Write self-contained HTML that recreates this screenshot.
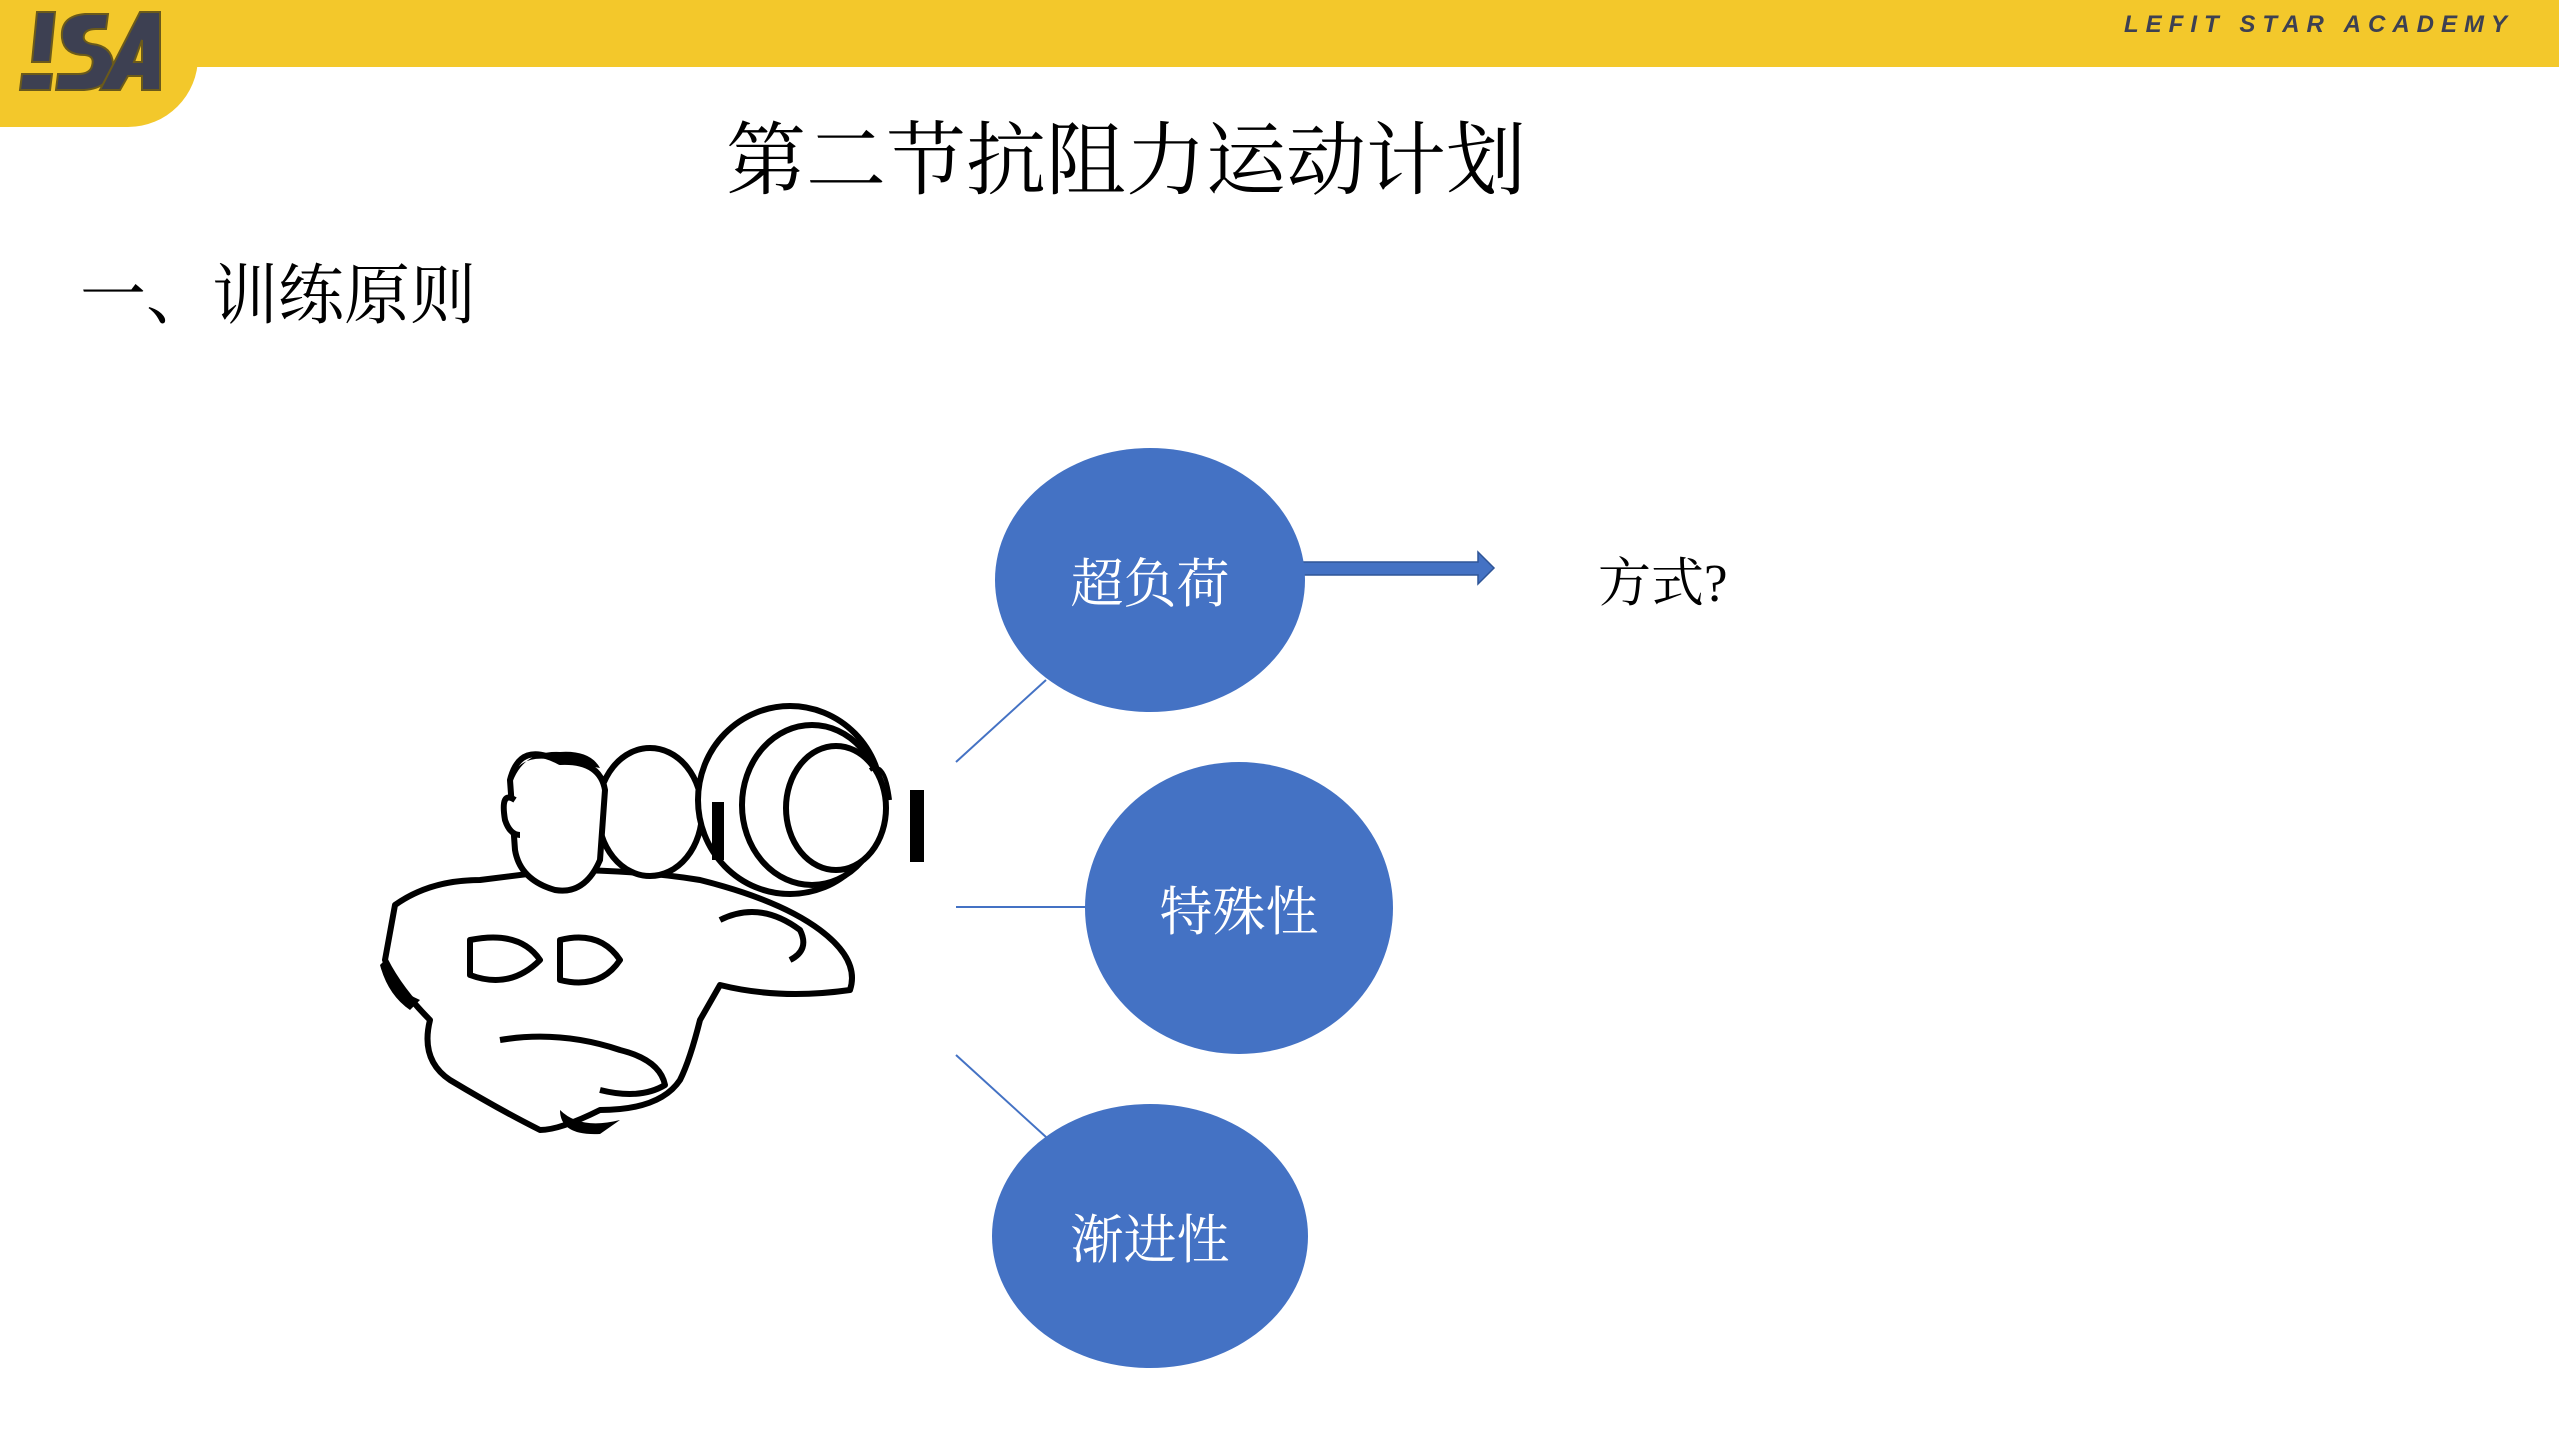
<!DOCTYPE html>
<html><head><meta charset="utf-8"><style>
html,body{margin:0;padding:0;background:#fff;}
body{width:2559px;height:1439px;position:relative;overflow:hidden;font-family:"Liberation Serif","Noto Serif CJK SC",serif;}
.bar{position:absolute;left:0;top:0;width:2559px;height:67px;background:#F3C82B;}
.tab{position:absolute;left:0;top:0;width:198px;height:127px;background:#F3C82B;border-bottom-right-radius:70px;}
.hdr{position:absolute;left:2124px;top:11px;white-space:nowrap;font:italic bold 24px "Liberation Sans",sans-serif;letter-spacing:7px;color:#3d4052;}
.t{position:absolute;white-space:nowrap;color:#000;}
.c{position:absolute;background:#4472C4;border-radius:50%;color:#fff;font-size:53px;display:flex;align-items:center;justify-content:center;}
</style></head><body>
<div class="bar"></div><div class="tab"></div>
<svg style="position:absolute;left:0;top:0" width="200" height="100">
<g fill="#3d4052" stroke="#6b5a1a" stroke-width="2">
<path d="M37 12 L55 12 L50 62 L32 62 Z"/>
<path d="M22 74 L52 74 L50 90 L20 90 Z"/>
<path d="M108 14 L85 14 Q60 16 62 38 Q64 55 85 55 Q95 56 92 66 Q90 74 78 74 L58 74 L56 90 L84 90 Q112 88 113 64 Q112 46 92 44 Q82 42 84 35 Q86 29 96 29 L106 29 Z"/>
<path d="M140 12 L160 12 L160 90 L142 90 L142 76 L128 76 L120 90 L100 90 Z M142 40 L134 62 L142 62 Z"/>
</g></svg>
<div class="hdr">LEFIT STAR ACADEMY</div>
<div class="t" style="left:726px;top:112px;font-size:80px;line-height:100px;">第二节抗阻力运动计划</div>
<div class="t" style="left:80px;top:255px;font-size:66px;line-height:84px;">一、训练原则</div>

<svg style="position:absolute;left:0;top:0" width="2559" height="1439">
<g stroke="#4472C4" stroke-width="2">
<line x1="956" y1="762" x2="1046" y2="680"/>
<line x1="956" y1="907" x2="1086" y2="907"/>
<line x1="956" y1="1055" x2="1046" y2="1137"/>
</g>
<path d="M1290 562 L1478 562 L1478 552 L1494 568 L1478 584 L1478 575 L1290 575 Z" fill="#4472C4" stroke="#2f5597" stroke-width="1.5"/>
<g stroke="#000" stroke-width="6" fill="#fff" stroke-linejoin="round">
<path d="M395 905 Q430 880 480 880 L560 870 Q640 870 700 880 Q780 900 820 930 Q860 960 850 990 Q780 1000 720 985 L700 1020 Q690 1060 680 1080 Q660 1110 600 1110 Q560 1130 540 1130 Q500 1110 450 1080 Q420 1060 430 1020 Q400 990 385 960 Z"/>
<ellipse cx="650" cy="812" rx="52" ry="64"/>
<ellipse cx="790" cy="800" rx="92" ry="94"/>
<ellipse cx="812" cy="805" rx="70" ry="80"/>
<ellipse cx="836" cy="808" rx="50" ry="62"/>
<path d="M510 780 Q520 740 560 762 Q600 760 605 790 L600 860 Q585 895 555 890 Q520 880 515 850 Z"/>
<path d="M515 800 Q500 790 505 820 Q510 835 520 835"/>
<path d="M560 940 Q600 930 620 960 Q600 990 560 980 Z M470 940 Q520 930 540 960 Q510 990 470 975 Z"/>
<path d="M500 1040 Q560 1030 620 1050 Q660 1060 665 1085 Q640 1100 600 1090"/>
<path d="M720 920 Q760 900 800 930 Q810 950 790 960"/>
</g>
<g fill="#000">
<path d="M510 790 Q512 752 555 760 L600 768 Q590 750 560 752 Q520 750 510 790Z"/>
<rect x="712" y="802" width="12" height="58"/>
<rect x="910" y="790" width="14" height="72"/>
<path d="M385 960 Q395 990 420 1000 L410 1010 Q388 995 380 965Z"/>
<path d="M560 1110 Q580 1130 620 1120 L600 1134 Q560 1136 560 1110Z"/>
</g>
<path d="M870 770 Q885 760 890 800" stroke="#000" stroke-width="4" fill="none"/>
</svg>

<div class="c" style="left:995px;top:448px;width:310px;height:264px;">超负荷</div>
<div class="c" style="left:1085px;top:762px;width:308px;height:292px;">特殊性</div>
<div class="c" style="left:992px;top:1104px;width:316px;height:264px;">渐进性</div>
<div class="t" style="left:1598px;top:552px;font-size:53px;line-height:64px;">方式?</div>
</body></html>
